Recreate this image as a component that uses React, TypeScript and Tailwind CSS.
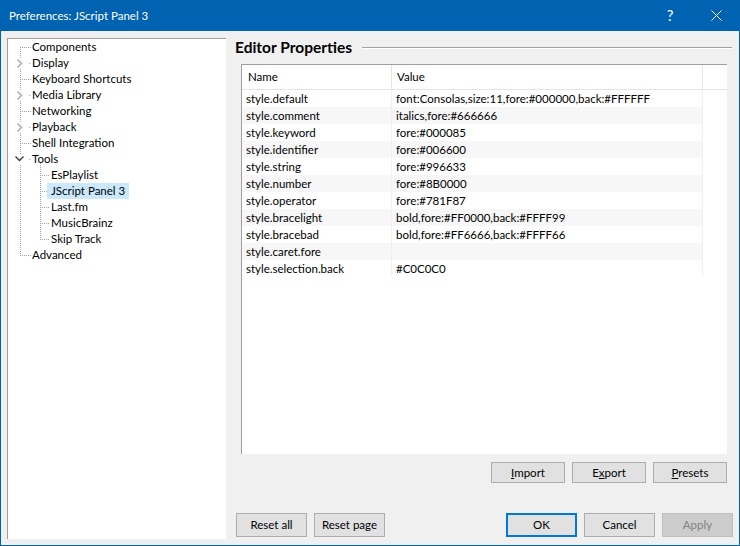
import React from "react";

type TreeKind = "first" | "leaf" | "collapsed" | "expanded" | "last";
interface TreeRow {
  label: string;
  level: 0 | 1;
  kind: TreeKind;
  selected?: boolean;
}

const treeRows: TreeRow[] = [
  { label: "Components", level: 0, kind: "first" },
  { label: "Display", level: 0, kind: "collapsed" },
  { label: "Keyboard Shortcuts", level: 0, kind: "leaf" },
  { label: "Media Library", level: 0, kind: "collapsed" },
  { label: "Networking", level: 0, kind: "leaf" },
  { label: "Playback", level: 0, kind: "collapsed" },
  { label: "Shell Integration", level: 0, kind: "leaf" },
  { label: "Tools", level: 0, kind: "expanded" },
  { label: "EsPlaylist", level: 1, kind: "leaf" },
  { label: "JScript Panel 3", level: 1, kind: "leaf", selected: true },
  { label: "Last.fm", level: 1, kind: "leaf" },
  { label: "MusicBrainz", level: 1, kind: "leaf" },
  { label: "Skip Track", level: 1, kind: "last" },
  { label: "Advanced", level: 0, kind: "last" },
];

const props: [string, string][] = [
  ["style.default", "font:Consolas,size:11,fore:#000000,back:#FFFFFF"],
  ["style.comment", "italics,fore:#666666"],
  ["style.keyword", "fore:#000085"],
  ["style.identifier", "fore:#006600"],
  ["style.string", "fore:#996633"],
  ["style.number", "fore:#8B0000"],
  ["style.operator", "fore:#781F87"],
  ["style.bracelight", "bold,fore:#FF0000,back:#FFFF99"],
  ["style.bracebad", "bold,fore:#FF6666,back:#FFFF66"],
  ["style.caret.fore", ""],
  ["style.selection.back", "#C0C0C0"],
];

const DOT = "#a0a0a0";

function vDots(x: number, y0: number, y1: number, key: string) {
  const out: React.ReactElement[] = [];
  for (let y = y0; y < y1; y += 2) {
    out.push(<rect key={key + y} x={x} y={y} width={1} height={1} fill={DOT} />);
  }
  return out;
}
function hDots(x0: number, x1: number, y: number, key: string) {
  const out: React.ReactElement[] = [];
  for (let x = x0; x < x1; x += 2) {
    out.push(<rect key={key + x} x={x} y={y} width={1} height={1} fill={DOT} />);
  }
  return out;
}

function TreeGutter({ row }: { row: TreeRow }) {
  const els: React.ReactElement[] = [];
  if (row.level === 0) {
    switch (row.kind) {
      case "first":
        els.push(...vDots(12, 8, 16, "v"));
        els.push(...hDots(14, 23, 8, "h"));
        break;
      case "leaf":
        els.push(...vDots(12, 0, 16, "v"));
        els.push(...hDots(14, 23, 8, "h"));
        break;
      case "last":
        els.push(...vDots(12, 0, 9, "v"));
        els.push(...hDots(14, 23, 8, "h"));
        break;
      case "collapsed":
        els.push(...vDots(12, 0, 3, "v"));
        els.push(...vDots(12, 14, 16, "w"));
        els.push(<rect key="d" x={21} y={8} width={1} height={1} fill={DOT} />);
        els.push(
          <polyline
            key="c"
            points="9.5,4.5 13.5,8.5 9.5,12.5"
            fill="none"
            stroke="#a6a6a6"
            strokeWidth={1.4}
          />
        );
        break;
      case "expanded":
        els.push(...vDots(12, 0, 3, "v"));
        els.push(...vDots(12, 14, 16, "w"));
        els.push(...vDots(32, 12, 16, "x"));
        els.push(<rect key="d" x={21} y={8} width={1} height={1} fill={DOT} />);
        els.push(
          <polyline
            key="c"
            points="7.5,5.5 11.5,9.5 15.5,5.5"
            fill="none"
            stroke="#3c3c3c"
            strokeWidth={1.4}
          />
        );
        break;
    }
    return (
      <svg width={20} height={16} className="shrink-0 overflow-visible">
        {els}
      </svg>
    );
  }
  els.push(...vDots(12, 0, 16, "v"));
  if (row.kind === "last") {
    els.push(...vDots(32, 0, 9, "u"));
  } else {
    els.push(...vDots(32, 0, 16, "u"));
  }
  els.push(...hDots(34, 41, 8, "h"));
  return (
    <svg width={39} height={16} className="shrink-0 overflow-visible">
      {els}
    </svg>
  );
}

function Btn({
  children,
  w,
  h,
  primary,
  disabled,
}: {
  children: React.ReactNode;
  w: string;
  h: string;
  primary?: boolean;
  disabled?: boolean;
}) {
  const base = "flex items-center justify-center text-[11.5px] shrink-0";
  if (disabled)
    return (
      <div className={`${base} ${w} ${h} bg-[#cccccc] border border-[#bfbfbf] text-[#838383]`}>
        {children}
      </div>
    );
  if (primary)
    return (
      <div className={`${base} ${w} ${h} bg-[#e1e1e1] border-2 border-[#0078d7] text-black`}>
        {children}
      </div>
    );
  return (
    <div className={`${base} ${w} ${h} bg-[#e1e1e1] border border-[#adadad] text-black`}>
      {children}
    </div>
  );
}

export default function App() {
  return (
    <div
      className="w-[740px] h-[546px] flex flex-col bg-[#0063b1] overflow-hidden"
      style={{ fontFamily: "Lato, 'Noto Sans', sans-serif" }}
    >
      {/* Title bar */}
      <div className="h-[31px] shrink-0 flex items-center text-white">
        <div className="pl-[9px] text-[11.5px] flex-1">Preferences: JScript Panel 3</div>
        <div className="w-[46px] text-center text-[15px] leading-none">?</div>
        <div className="w-[46px] flex items-center justify-center mr-[1px]">
          <svg width="11" height="11" viewBox="0 0 11 11">
            <path d="M0.5 0.5 L10.5 10.5 M10.5 0.5 L0.5 10.5" stroke="white" strokeWidth="1" />
          </svg>
        </div>
      </div>

      {/* Body */}
      <div className="flex-1 mx-[1px] mb-[1px] bg-[#f0f0f0] flex text-[11.5px] text-black">
        {/* Tree */}
        <div className="ml-[6px] mt-[7px] w-[219px] h-[501px] bg-white border-t border-l border-[#a0a0a0]">
          {treeRows.map((r) => (
            <div key={r.label} className="flex h-[16px] items-center">
              <TreeGutter row={r} />
              <span
                className={`h-[16px] leading-[16px] px-[4px] ${
                  r.selected ? "bg-[#cce8ff]" : ""
                }`}
              >
                {r.label}
              </span>
            </div>
          ))}
        </div>

        {/* Right column */}
        <div className="ml-[9px] w-[498px] flex flex-col">
          <div className="mt-[7px] h-[19px] flex items-center">
            <span className="text-[15.5px] font-bold leading-none whitespace-nowrap">
              Editor Properties
            </span>
            <div className="ml-[10px] flex-1 h-[2px] border-t border-[#a0a0a0] border-b border-b-white mr-[1px]" />
          </div>

          {/* List view */}
          <div className="mt-[7px] ml-[6px] w-[486px] h-[390px] bg-white border-t border-l border-[#a0a0a0] flex flex-col">
            <div className="flex h-[25px] shrink-0 border-b border-[#e5e5e5]">
              <div className="w-[150px] border-r border-[#e5e5e5] pl-[6px] flex items-center">Name</div>
              <div className="w-[311px] border-r border-[#e5e5e5] pl-[5px] flex items-center">Value</div>
              <div className="flex-1" />
            </div>
            {props.map(([n, v], i) => (
              <div key={n} className="flex h-[17px]">
                <div
                  className={`w-[150px] border-r border-[#f0f0f0] pl-[4px] leading-[17px] ${
                    i % 2 === 1 ? "bg-[#f7f7f7]" : ""
                  }`}
                >
                  {n}
                </div>
                <div
                  className={`w-[311px] border-r border-[#f0f0f0] pl-[4px] leading-[17px] whitespace-nowrap ${
                    i % 2 === 1 ? "bg-[#f7f7f7]" : ""
                  }`}
                >
                  {v}
                </div>
                <div className="flex-1" />
              </div>
            ))}
          </div>

          {/* Import / Export / Presets */}
          <div className="mt-[8px] ml-[6px] w-[486px] flex justify-end gap-[7px]">
            <Btn w="w-[74px]" h="h-[21px]">
              <span>
                <u>I</u>mport
              </span>
            </Btn>
            <Btn w="w-[74px]" h="h-[21px]">
              <span>
                E<u>x</u>port
              </span>
            </Btn>
            <Btn w="w-[74px]" h="h-[21px]">
              <span>
                <u>P</u>resets
              </span>
            </Btn>
          </div>

          {/* Bottom buttons */}
          <div className="mt-[30px] flex items-center">
            <div className="ml-[1px] flex gap-[7px]">
              <Btn w="w-[71px]" h="h-[24px]">Reset all</Btn>
              <Btn w="w-[71px]" h="h-[24px]">Reset page</Btn>
            </div>
            <div className="flex-1" />
            <div className="flex gap-[7px]">
              <Btn w="w-[71px]" h="h-[24px]" primary>
                OK
              </Btn>
              <Btn w="w-[71px]" h="h-[24px]">Cancel</Btn>
              <Btn w="w-[71px]" h="h-[24px]" disabled>
                Apply
              </Btn>
            </div>
          </div>
        </div>
      </div>
    </div>
  );
}
